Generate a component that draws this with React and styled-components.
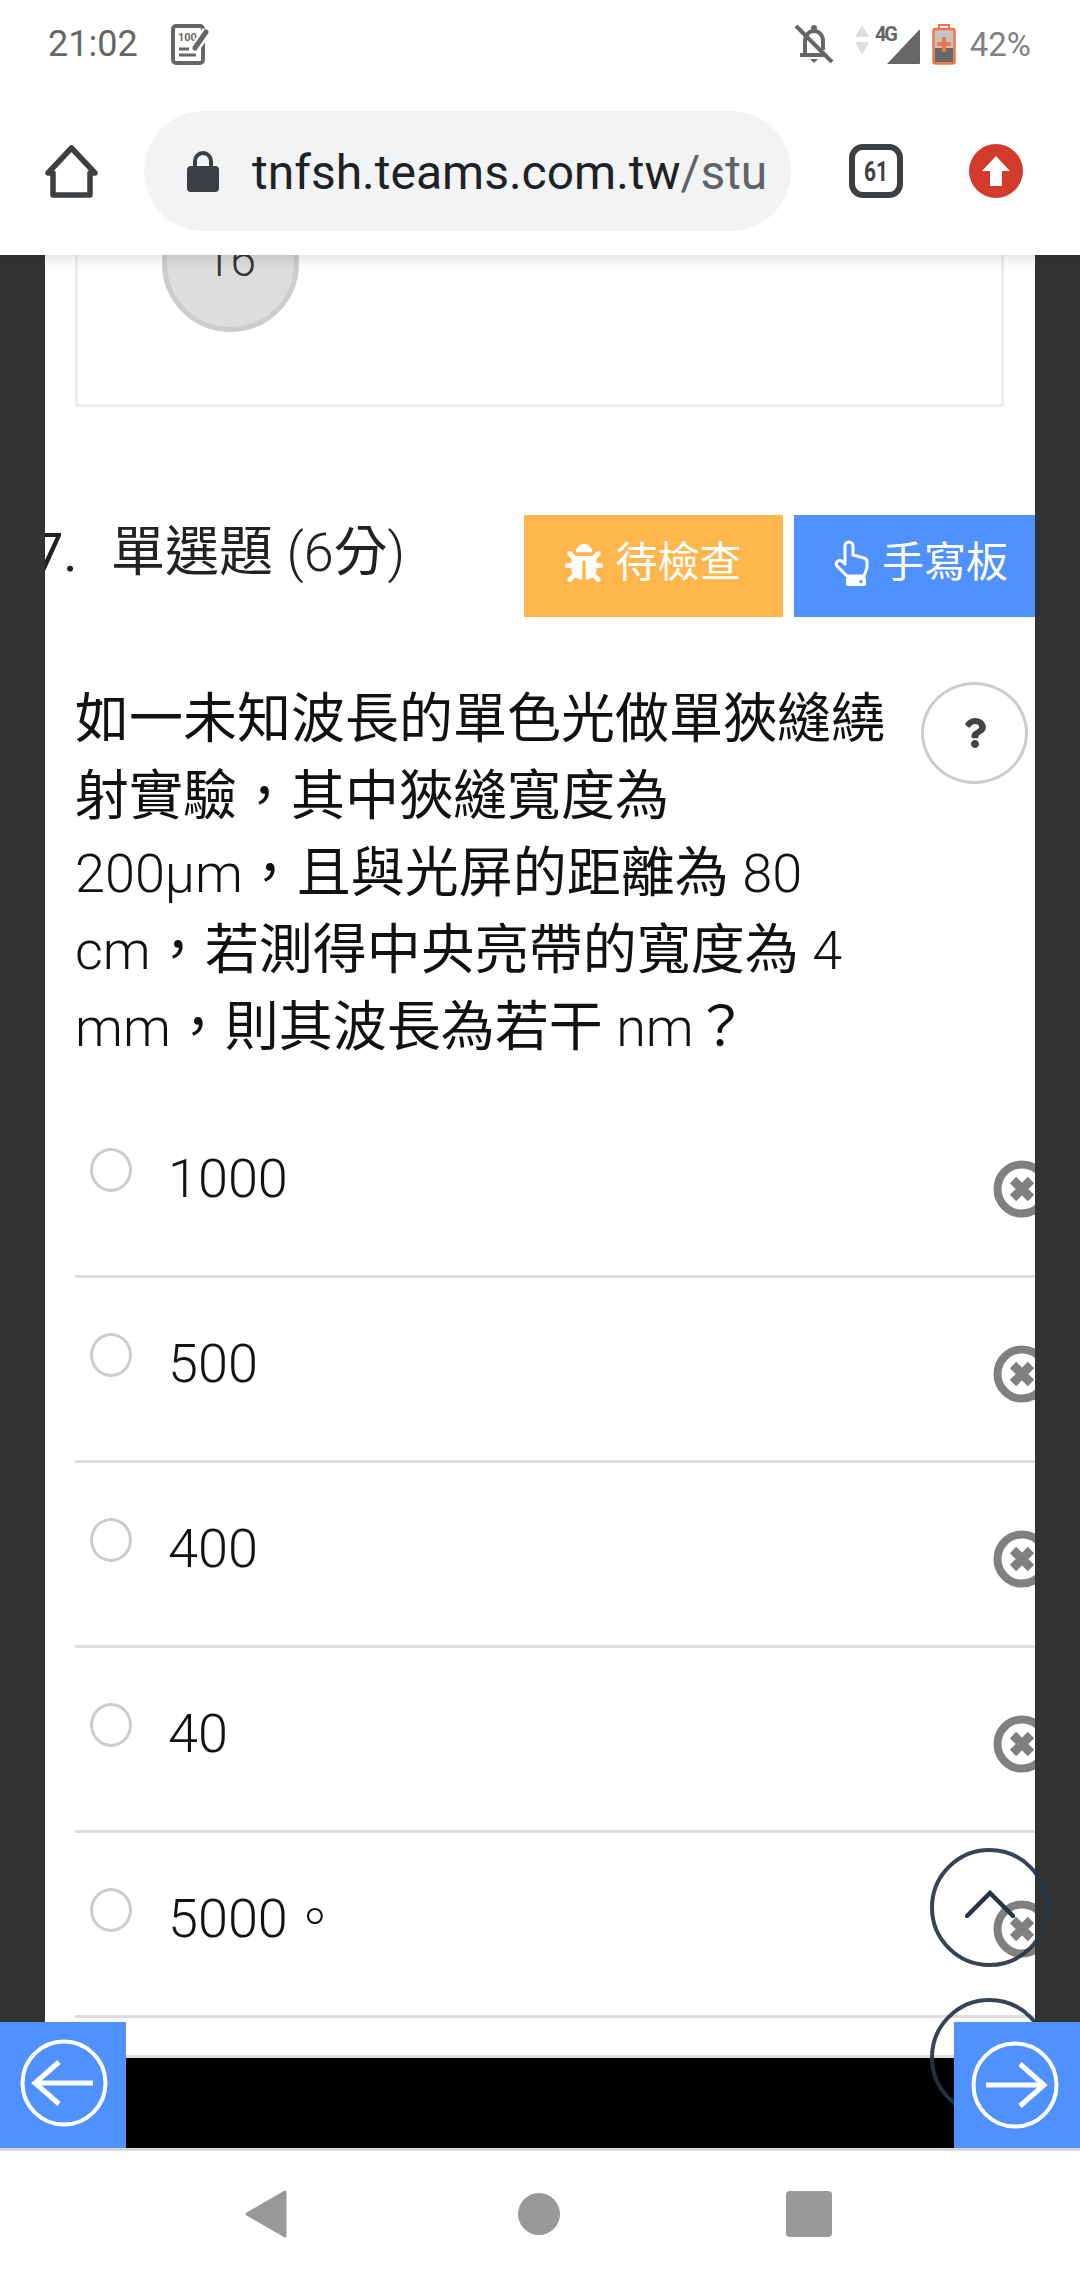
import styled, { createGlobalStyle } from 'styled-components';
import { FaBug, FaQuestion } from 'react-icons/fa';

const GlobalStyle = createGlobalStyle`
  html, body { margin: 0; padding: 0; background: #fff; }
  * { box-sizing: border-box; }
  body { font-family: Roboto, "Noto Sans CJK TC", sans-serif; }
`;

const Page = styled.div`
  position: relative;
  width: 1080px;
  height: 2280px;
  display: flex;
  flex-direction: column;
  overflow: hidden;
  background: #fff;
`;

/* status bar */
const StatusBar = styled.div`
  position: relative;
  z-index: 6;
  height: 100px;
  flex-shrink: 0;
  display: flex;
  align-items: center;
  padding: 0 49px 12px 48px;
  background: #fff;
  color: #666;
`;
const Clock = styled.span`
  font-size: 36px;
  line-height: 36px;
  margin-right: 33px;
`;
const StatusRight = styled.div`
  margin-left: auto;
  display: flex;
  align-items: center;
`;
const BellSvg = styled.svg`
  margin-right: 20px;
`;
const BatterySvg = styled.svg`
  margin-left: 11px;
`;
const Percent = styled.span`
  font-size: 33px;
  line-height: 34px;
  color: #808080;
  margin-left: 14px;
  padding-top: 2px;
`;

/* browser toolbar */
const Toolbar = styled.div`
  position: relative;
  z-index: 5;
  height: 155px;
  flex-shrink: 0;
  display: flex;
  align-items: center;
  padding: 0 0 13px 45px;
  background: #fff;
  box-shadow: 0 3px 14px rgba(0, 0, 0, 0.14);
`;
const UrlPill = styled.div`
  width: 647px;
  height: 120px;
  margin: 0 58px 0 46px;
  padding: 0 10px 0 43px;
  display: flex;
  align-items: center;
  flex-shrink: 0;
  border-radius: 60px;
  background: #f1f3f4;
`;
const LockSvg = styled.svg`
  flex-shrink: 0;
`;
const Url = styled.div`
  margin: 3px 0 0 33px;
  font-size: 48px;
  line-height: 60px;
  white-space: nowrap;
  overflow: hidden;
  color: #202124;
  span { color: #5f6368; }
`;
const RedBadge = styled.div`
  width: 54px;
  height: 54px;
  margin-left: 66px;
  border-radius: 50%;
  background: #d33b2c;
  display: flex;
  align-items: center;
  justify-content: center;
`;

/* page content */
const Main = styled.main`
  flex: 1;
  min-height: 0;
  padding: 0 45px;
  background: #333;
  overflow: hidden;
`;
const Sheet = styled.div`
  margin-top: -100px;
  padding-left: 30px;
  background: #fff;
  overflow: hidden;
`;
const SeatPanel = styled.div`
  width: 929px;
  height: 252px;
  padding: 37px 0 0 84px;
  border: 3px solid #eee;
`;
const SeatCircle = styled.div`
  width: 137px;
  height: 137px;
  padding-bottom: 8px;
  display: flex;
  align-items: center;
  justify-content: center;
  border-radius: 50%;
  border: 5px solid #ccc;
  background: #ddd;
  color: #333;
  font-size: 46px;
  font-weight: 300;
`;
const TitleRow = styled.div`
  display: flex;
  align-items: flex-start;
  margin: 108px 0 64px -42px;
`;
const Title = styled.h2`
  margin: 0;
  display: flex;
  font-size: 54px;
  font-weight: 400;
  line-height: 76px;
  color: #222;
`;
const QuestionNo = styled.span`
  width: 78px;
`;
const Light = styled.span`
  font-weight: 300;
`;
const ActionGroup = styled.div`
  margin-left: auto;
  display: flex;
  gap: 11px;
`;
const ActionButton = styled.div`
  width: ${(p) => p.$width}px;
  height: 102px;
  padding: 0 0 6px ${(p) => p.$shift}px;
  display: flex;
  align-items: center;
  justify-content: center;
  gap: 12px;
  background: ${(p) => p.$color};
  color: #fff;
  font-size: 42px;
  line-height: 56px;
  svg { font-size: 38px; flex-shrink: 0; }
`;
const QuestionRow = styled.div`
  position: relative;
`;
const QuestionText = styled.p`
  margin: 0;
  font-size: 54px;
  line-height: 77px;
  color: #111;
  white-space: nowrap;
`;
const HelpButton = styled.div`
  position: absolute;
  top: 1px;
  left: 846px;
  width: 107px;
  height: 102px;
  display: flex;
  align-items: center;
  justify-content: center;
  border-radius: 50%;
  border: 3px solid #ccc;
  color: #444;
  svg { font-size: 30px; }
`;
const OptionList = styled.div`
  margin-top: 27px;
`;
const Option = styled.div`
  height: ${(p) => p.$height || 185}px;
  display: flex;
  align-items: flex-start;
  border-bottom: 3px solid #ddd;
`;
const Radio = styled.span`
  width: 42px;
  height: 44px;
  margin: 55px 0 0 15px;
  flex-shrink: 0;
  border-radius: 50%;
  border: 3px solid #ccc;
`;
const OptionLabel = styled.span`
  margin: 48px 0 0 36px;
  font-size: 54px;
  line-height: 76px;
  font-weight: 300;
  color: #111;
`;
const RemoveIcon = styled.svg`
  width: 58px;
  height: 58px;
  margin: 67px -16px 0 auto;
  flex-shrink: 0;
`;

/* floating round buttons */
const ScrollCircle = styled.div`
  position: absolute;
  z-index: 2;
  left: 930px;
  top: ${(p) => p.$top}px;
  width: 119px;
  height: 119px;
  border-radius: 50%;
  border: 4px solid rgba(38, 52, 68, 0.92);
  display: flex;
  align-items: center;
  justify-content: center;
`;
const ChevronSvg = styled.svg`
  margin: 0 0 7px 1px;
`;

/* footer */
const Footer = styled.div`
  height: 90px;
  flex-shrink: 0;
  display: flex;
  justify-content: space-between;
  align-items: flex-end;
  background: #000;
`;
const PageButton = styled.div`
  position: relative;
  z-index: 4;
  width: 126px;
  height: 126px;
  display: flex;
  align-items: center;
  justify-content: center;
  background: #4f91ff;
`;
const ArrowSvg = styled.svg`
  margin: ${(p) => (p.$left ? '0 0 4px 2px' : '0 4px 0 0')};
`;
const NavBar = styled.div`
  position: relative;
  z-index: 4;
  height: 132px;
  flex-shrink: 0;
  padding: 0 3px 4px 0;
  display: flex;
  align-items: center;
  justify-content: center;
  gap: 231px;
  border-top: 3px solid #d8d8dc;
  background: #fff;
`;
const NavSquare = styled.svg`
  margin-left: -5px;
`;

const NoteIcon = () => (
  <svg width="38" height="42" viewBox="0 0 38 42">
    <rect x="2" y="3" width="30" height="37" rx="3" fill="none" stroke="#666" strokeWidth="4" />
    <text x="7" y="18" fontFamily="Roboto" fontWeight="700" fontSize="11" fill="#666">100</text>
    <path d="M8 26h10M8 32h17" stroke="#666" strokeWidth="3" />
    <path d="M36 8L23 26" stroke="#fff" strokeWidth="10" />
    <path d="M35 9L24 25" stroke="#666" strokeWidth="5" strokeLinecap="round" />
  </svg>
);

const BellOff = () => (
  <BellSvg width="40" height="40" viewBox="0 0 40 40">
    <path d="M11 31V17c0-6 4-10 9-10s9 4 9 10v9" fill="none" stroke="#666" strokeWidth="4" />
    <path d="M6 31h26" stroke="#666" strokeWidth="4" />
    <path d="M16 35h8l-4 4z" fill="#666" />
    <circle cx="20" cy="4" r="3" fill="#666" />
    <path d="M2 2l36 36" stroke="#666" strokeWidth="4" />
  </BellSvg>
);

const SignalCluster = () => (
  <svg width="67" height="44" viewBox="0 0 67 44">
    <path d="M1 15L8 3l7 12zM1 20l7 13 7-13z" fill="#ddd" />
    <text x="21" y="19" fontFamily="Roboto" fontWeight="700" fontSize="20" fill="#666" textLength="23">4G</text>
    <path d="M33 42L65 8q1-1 1 1v32q0 1-1 1z" fill="#666" />
  </svg>
);

const BatteryIcon = () => (
  <BatterySvg width="24" height="41" viewBox="0 0 24 41">
    <rect x="7" y="1" width="10" height="5" fill="none" stroke="#ee7649" strokeWidth="2" />
    <rect x="1.5" y="5" width="21" height="34.5" rx="2" fill="#c4c4c4" stroke="#ee7649" strokeWidth="2.5" />
    <rect x="3" y="24" width="18" height="14" fill="#666" />
    <path d="M12 13v15M5 20h14" stroke="#ee7649" strokeWidth="4" />
  </BatterySvg>
);

const HomeIcon = () => (
  <svg width="53" height="54" viewBox="0 0 53 54">
    <path d="M26.5 4L3 29h5v22h37V29h5z" fill="none" stroke="#3c4043" strokeWidth="5.5" strokeLinejoin="round" />
  </svg>
);

const LockIcon = () => (
  <LockSvg width="32" height="41" viewBox="0 0 32 41">
    <path d="M8 18V10a8 8 0 0 1 16 0v8" fill="none" stroke="#3c4043" strokeWidth="4" />
    <rect x="0" y="15" width="32" height="26" rx="4" fill="#3c4043" />
  </LockSvg>
);

const TabCount = () => (
  <svg width="54" height="54" viewBox="0 0 54 54">
    <rect x="3" y="3" width="48" height="48" rx="11" fill="none" stroke="#3c4043" strokeWidth="6" />
    <text x="27" y="37" textAnchor="middle" fontFamily="Roboto" fontWeight="700" fontSize="27" fill="#3c4043" textLength="24" lengthAdjust="spacingAndGlyphs">61</text>
  </svg>
);

const HandIcon = () => (
  <svg width="36" height="46" viewBox="0 0 36 46">
    <path d="M11 24V6a4 4 0 0 1 8 0v9l11 3q3 1 3 4v6l-3 8H13L3 26q-2-3 1-5q3-2 7 3z" fill="none" stroke="#fff" strokeWidth="3" strokeLinejoin="round" />
    <rect x="12" y="37" width="20" height="9" rx="2" fill="#fff" />
    <circle cx="27" cy="41.5" r="1.6" fill="#4f91ff" />
  </svg>
);

const RemoveGlyph = () => (
  <RemoveIcon viewBox="0 0 58 58">
    <circle cx="29" cy="29" r="24.5" fill="#fff" stroke="#808080" strokeWidth="8" />
    <path d="M20 20l18 18M38 20L20 38" stroke="#808080" strokeWidth="9" />
  </RemoveIcon>
);

const CircleArrow = ({ left }) => (
  <ArrowSvg $left={left} width="88" height="88" viewBox="0 0 88 88">
    <circle cx="44" cy="44" r="41.5" fill="none" stroke="#fff" strokeWidth="4" />
    {left ? (
      <path d="M73 44H15M39 23L15 44l24 21" fill="none" stroke="#fff" strokeWidth="5" />
    ) : (
      <path d="M15 44h58M49 23l24 21-24 21" fill="none" stroke="#fff" strokeWidth="5" />
    )}
  </ArrowSvg>
);

const options = ['1000', '500', '400', '40', '5000\u3002'];
const COMMA = '\uFF0C';
const ASK = '\uFF1F';

export default function App() {
  return (
    <Page>
      <GlobalStyle />
      <StatusBar>
        <Clock>21:02</Clock>
        <NoteIcon />
        <StatusRight>
          <BellOff />
          <SignalCluster />
          <BatteryIcon />
          <Percent>42%</Percent>
        </StatusRight>
      </StatusBar>

      <Toolbar>
        <HomeIcon />
        <UrlPill>
          <LockIcon />
          <Url>tnfsh.teams.com.tw<span>/stu</span></Url>
        </UrlPill>
        <TabCount />
        <RedBadge>
          <svg width="30" height="32" viewBox="0 0 30 32">
            <path d="M15 1L29 16H21V31H9V16H1z" fill="#fff" />
          </svg>
        </RedBadge>
      </Toolbar>

      <Main>
        <Sheet>
          <SeatPanel>
            <SeatCircle>16</SeatCircle>
          </SeatPanel>

          <TitleRow>
            <Title>
              <QuestionNo>7.</QuestionNo>
              <span>單選題 <Light>(6</Light>分<Light>)</Light></span>
            </Title>
            <ActionGroup>
              <ActionButton $width={259} $shift={0} $color="#ffb74d"><FaBug /><span>待檢查</span></ActionButton>
              <ActionButton $width={241} $shift={13} $color="#4f91ff"><HandIcon /><span>手寫板</span></ActionButton>
            </ActionGroup>
          </TitleRow>

          <QuestionRow>
            <QuestionText>
              如一未知波長的單色光做單狹縫繞<br />
              射實驗{COMMA}其中狹縫寬度為<br />
              <Light>200μm</Light>{COMMA}且與光屏的距離為 <Light>80</Light><br />
              <Light>cm</Light>{COMMA}若測得中央亮帶的寬度為 <Light>4</Light><br />
              <Light>mm</Light>{COMMA}則其波長為若干 <Light>nm</Light>{ASK}
            </QuestionText>
            <HelpButton><FaQuestion /></HelpButton>
          </QuestionRow>

          <OptionList>
            {options.map((text) => (
              <Option key={text}>
                <Radio />
                <OptionLabel>{text}</OptionLabel>
                <RemoveGlyph />
              </Option>
            ))}
            <Option $height={40} />
          </OptionList>
        </Sheet>
      </Main>

      <ScrollCircle $top={1848}>
        <ChevronSvg width="50" height="28" viewBox="0 0 50 28">
          <path d="M2 26L25 3l23 23" fill="none" stroke="#263444" strokeWidth="4.5" strokeLinecap="round" />
        </ChevronSvg>
      </ScrollCircle>
      <ScrollCircle $top={1998} />

      <Footer>
        <PageButton><CircleArrow left /></PageButton>
        <PageButton><CircleArrow /></PageButton>
      </Footer>

      <NavBar>
        <svg width="42" height="48" viewBox="0 0 42 48">
          <path d="M40 2v44L2 24z" fill="#999" stroke="#999" strokeWidth="3" strokeLinejoin="round" />
        </svg>
        <svg width="42" height="42" viewBox="0 0 42 42">
          <circle cx="21" cy="21" r="21" fill="#999" />
        </svg>
        <NavSquare width="46" height="46" viewBox="0 0 46 46">
          <rect width="46" height="46" rx="4" fill="#999" />
        </NavSquare>
      </NavBar>
    </Page>
  );
}
